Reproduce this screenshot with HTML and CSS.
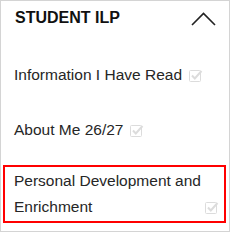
FILE: index.html
```html
<!DOCTYPE html>
<html lang="en">
<head>
  <meta charset="UTF-8">
  <title>Student ILP</title>
  <link rel="stylesheet" href="styles.css">
</head>
<body>
  <div class="panel">
    <div class="panel-header">
      <span class="panel-title">STUDENT ILP</span>
      <svg class="chevron" width="25" height="14" viewBox="0 0 25 14">
        <polyline points="1,13 12.5,1.5 24,13" fill="none" stroke="#222" stroke-width="1.6"/>
      </svg>
    </div>
    <ul class="ilp-list">
      <li class="ilp-item">
        <span class="ilp-text">Information I Have Read</span>
        <svg class="check" width="14" height="13" viewBox="0 0 14 13">
          <rect x="0.5" y="1.5" width="11" height="11" rx="1" fill="none" stroke="#dcdcdc"/>
          <path d="M3 6.5 L5.8 9.5 L12.5 2" fill="none" stroke="#dcdcdc" stroke-width="2"/>
        </svg>
      </li>
      <li class="ilp-item">
        <span class="ilp-text">About Me 26/27</span>
        <svg class="check" width="14" height="13" viewBox="0 0 14 13">
          <rect x="0.5" y="1.5" width="11" height="11" rx="1" fill="none" stroke="#dcdcdc"/>
          <path d="M3 6.5 L5.8 9.5 L12.5 2" fill="none" stroke="#dcdcdc" stroke-width="2"/>
        </svg>
      </li>
      <li class="ilp-item active">
        <span class="ilp-text">Personal Development and Enrichment</span>
        <svg class="check" width="14" height="13" viewBox="0 0 14 13">
          <rect x="0.5" y="1.5" width="11" height="11" rx="1" fill="none" stroke="#dcdcdc"/>
          <path d="M3 6.5 L5.8 9.5 L12.5 2" fill="none" stroke="#dcdcdc" stroke-width="2"/>
        </svg>
      </li>
    </ul>
  </div>
</body>
</html>
```

FILE: styles.css
```css
body {
  margin: 0;
  padding: 0;
  background-color: #FFFFFF;
  font-family: 'Liberation Sans', 'Arial', sans-serif;
  color: #262626;
}
.panel {
  width: 230px;
  height: 232px;
  box-sizing: border-box;
  border: 1px solid #d4d4d4;
}
.panel-header {
  display: flex;
  justify-content: space-between;
  align-items: flex-start;
  padding: 8px 13px 0 14px;
  height: 50px;
}
.panel-title {
  font-size: 16px;
  font-weight: bold;
  line-height: 18px;
  color: #111111;
}
.chevron {
  margin-top: 3px;
}
.ilp-list {
  list-style: none;
  margin: 0;
  padding: 0 3px 0 2px;
}
.ilp-item {
  display: flex;
  align-items: flex-end;
  gap: 7px;
  padding: 1px 5px 1px 9px;
  border: 2px solid transparent;
  font-size: 15.5px;
  line-height: 26px;
}
.ilp-item + .ilp-item {
  margin-top: 23px;
}
.ilp-item.active {
  gap: 3px;
  margin-top: 19px;
  border-color: #ff0000;
}
.check {
  flex-shrink: 0;
  margin-bottom: 6px;
}
```
